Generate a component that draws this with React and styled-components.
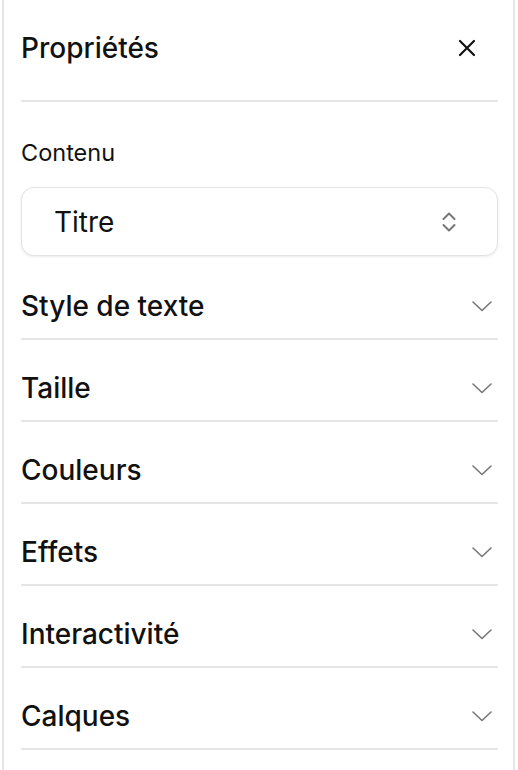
import React, { useState } from "react";
import styled, { createGlobalStyle } from "styled-components";

const GlobalStyle = createGlobalStyle`
  * { box-sizing: border-box; }
  body {
    margin: 0;
    background: #ffffff;
    font-family: Inter, "Noto Sans", "Liberation Sans", sans-serif;
    color: #111111;
  }
`;

const sections = [
  "Style de texte",
  "Taille",
  "Couleurs",
  "Effets",
  "Interactivité",
  "Calques",
];

const CloseIcon = () => (
  <svg width="18" height="18" viewBox="0 0 18 18" fill="none">
    <path d="M2 2 L16 16 M16 2 L2 16" stroke="#111" strokeWidth="2.2" strokeLinecap="round" />
  </svg>
);

const UpDownIcon = () => (
  <svg width="16" height="24" viewBox="0 0 16 24" fill="none">
    <path
      d="M2.5 9 L8 3.5 L13.5 9 M2.5 15 L8 20.5 L13.5 15"
      stroke="#777"
      strokeWidth="2"
      strokeLinecap="round"
      strokeLinejoin="round"
    />
  </svg>
);

const ChevronIcon = () => (
  <svg width="20" height="11" viewBox="0 0 20 11" fill="none">
    <path d="M1 1 L10 9.5 L19 1" stroke="#777" strokeWidth="1.6" strokeLinecap="round" strokeLinejoin="round" />
  </svg>
);

export default function App() {
  const [open, setOpen] = useState(null);

  return (
    <>
      <GlobalStyle />
      <Panel>
        <Header>
          <Title>Propriétés</Title>
          <CloseButton aria-label="Fermer">
            <CloseIcon />
          </CloseButton>
        </Header>

        <Field>
          <Label>Contenu</Label>
          <Select>
            <span>Titre</span>
            <UpDownIcon />
          </Select>
        </Field>

        <SectionList>
          {sections.map((name) => (
            <Section key={name}>
              <Trigger onClick={() => setOpen(open === name ? null : name)}>
                <span>{name}</span>
                <ChevronWrap $open={open === name}>
                  <ChevronIcon />
                </ChevronWrap>
              </Trigger>
            </Section>
          ))}
        </SectionList>
      </Panel>
    </>
  );
}

// ======= STYLED COMPONENTS ======= //

const Panel = styled.aside`
  width: 513px;
  min-height: 770px;
  margin-left: 2px;
  padding: 0 15px 0 17px;
  border-left: 2px solid #e6e6e6;
  border-right: 2px solid #e6e6e6;
  background: #fff;
`;

const Header = styled.header`
  display: flex;
  align-items: center;
  justify-content: space-between;
  height: 102px;
  padding-bottom: 4px;
  border-bottom: 2px solid #e6e6e6;
`;

const Title = styled.h2`
  margin: 0;
  font-size: 28px;
  font-weight: 450;
  line-height: 32px;
`;

const CloseButton = styled.button`
  display: flex;
  align-items: center;
  justify-content: center;
  width: 32px;
  height: 32px;
  margin-right: 15px;
  padding: 0;
  border: none;
  background: none;
  cursor: pointer;
`;

const Field = styled.div`
  display: flex;
  flex-direction: column;
  gap: 20px;
  padding-top: 37px;
`;

const Label = styled.label`
  font-size: 23.5px;
  font-weight: 400;
  line-height: 28px;
`;

const Select = styled.button`
  display: flex;
  align-items: center;
  justify-content: space-between;
  width: 100%;
  height: 69px;
  padding: 0 40px 0 32px;
  border: 1px solid #e3e3e3;
  border-radius: 13px;
  background: #fff;
  box-shadow: 0 1px 3px rgba(0, 0, 0, 0.08);
  font-family: inherit;
  font-size: 28px;
  font-weight: 400;
  color: #111;
  cursor: pointer;
`;

const SectionList = styled.div`
  margin-top: 2px;
`;

const Section = styled.div`
  border-bottom: 2px solid #e6e6e6;
`;

const Trigger = styled.button`
  display: flex;
  align-items: center;
  justify-content: space-between;
  width: 100%;
  padding: 32px 6px 16px 0;
  border: none;
  background: none;
  font-family: inherit;
  font-size: 28px;
  font-weight: 450;
  line-height: 32px;
  color: #111;
  text-align: left;
  cursor: pointer;
`;

const ChevronWrap = styled.span`
  display: flex;
  transition: transform 0.2s;
  transform: ${(p) => (p.$open ? "rotate(180deg)" : "none")};
`;
